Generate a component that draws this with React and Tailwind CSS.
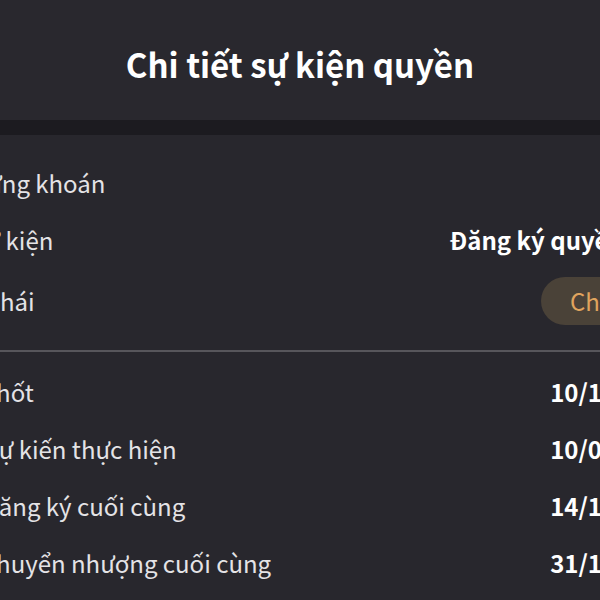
import React from 'react';

const topRows = [
  { label: 'Mã chứng khoán', value: '' },
  { label: 'Loại sự kiện', value: 'Đăng ký quyền mua' },
];

const dateRows = [
  { label: 'Ngày chốt', value: '10/12/2024' },
  { label: 'Ngày dự kiến thực hiện', value: '10/01/2025' },
  { label: 'Ngày đăng ký cuối cùng', value: '14/12/2024' },
  { label: 'Ngày chuyển nhượng cuối cùng', value: '31/12/2024' },
];

const Row = ({ label, value }) => (
  <div className="flex h-[57px] items-center justify-between">
    <span className="text-[24px] text-[#e4e3e6]">{label}</span>
    <span className="text-[24px] font-bold text-white">{value}</span>
  </div>
);

const App = () => {
  return (
    <div
      className="h-[600px] w-[600px] overflow-hidden bg-[#28272d]"
      style={{ fontFamily: '"Noto Sans CJK SC", "Noto Sans", sans-serif' }}
    >
      {/* Header */}
      <div className="flex h-[120px] items-center justify-center bg-[#29282e]">
        <h1 className="pt-[10px] text-[33px] font-semibold text-white">Chi tiết sự kiện quyền</h1>
      </div>
      <div className="h-[15px] bg-[#1c1b20]" />

      {/* Detail list, wider than the viewport */}
      <div className="ml-[-78px] w-[760px] pt-[19px]">
        {topRows.map((row, i) => (
          <Row key={i} label={row.label} value={row.value} />
        ))}
        <div className="flex h-[66px] items-center justify-between">
          <span className="text-[24px] text-[#e4e3e6]">Trạng thái</span>
          <span className="mr-[-18px] flex h-[48px] items-center rounded-full bg-[#4a4238] px-[29px] text-[24px] text-[#e0a45e]">
            Chờ xử lý
          </span>
        </div>
        <div className="mt-[16px] h-[2px] bg-[#57565b]" />
        <div className="pt-[11px]">
          {dateRows.map((row, i) => (
            <Row key={i} label={row.label} value={row.value} />
          ))}
        </div>
      </div>
    </div>
  );
};

export default App;
